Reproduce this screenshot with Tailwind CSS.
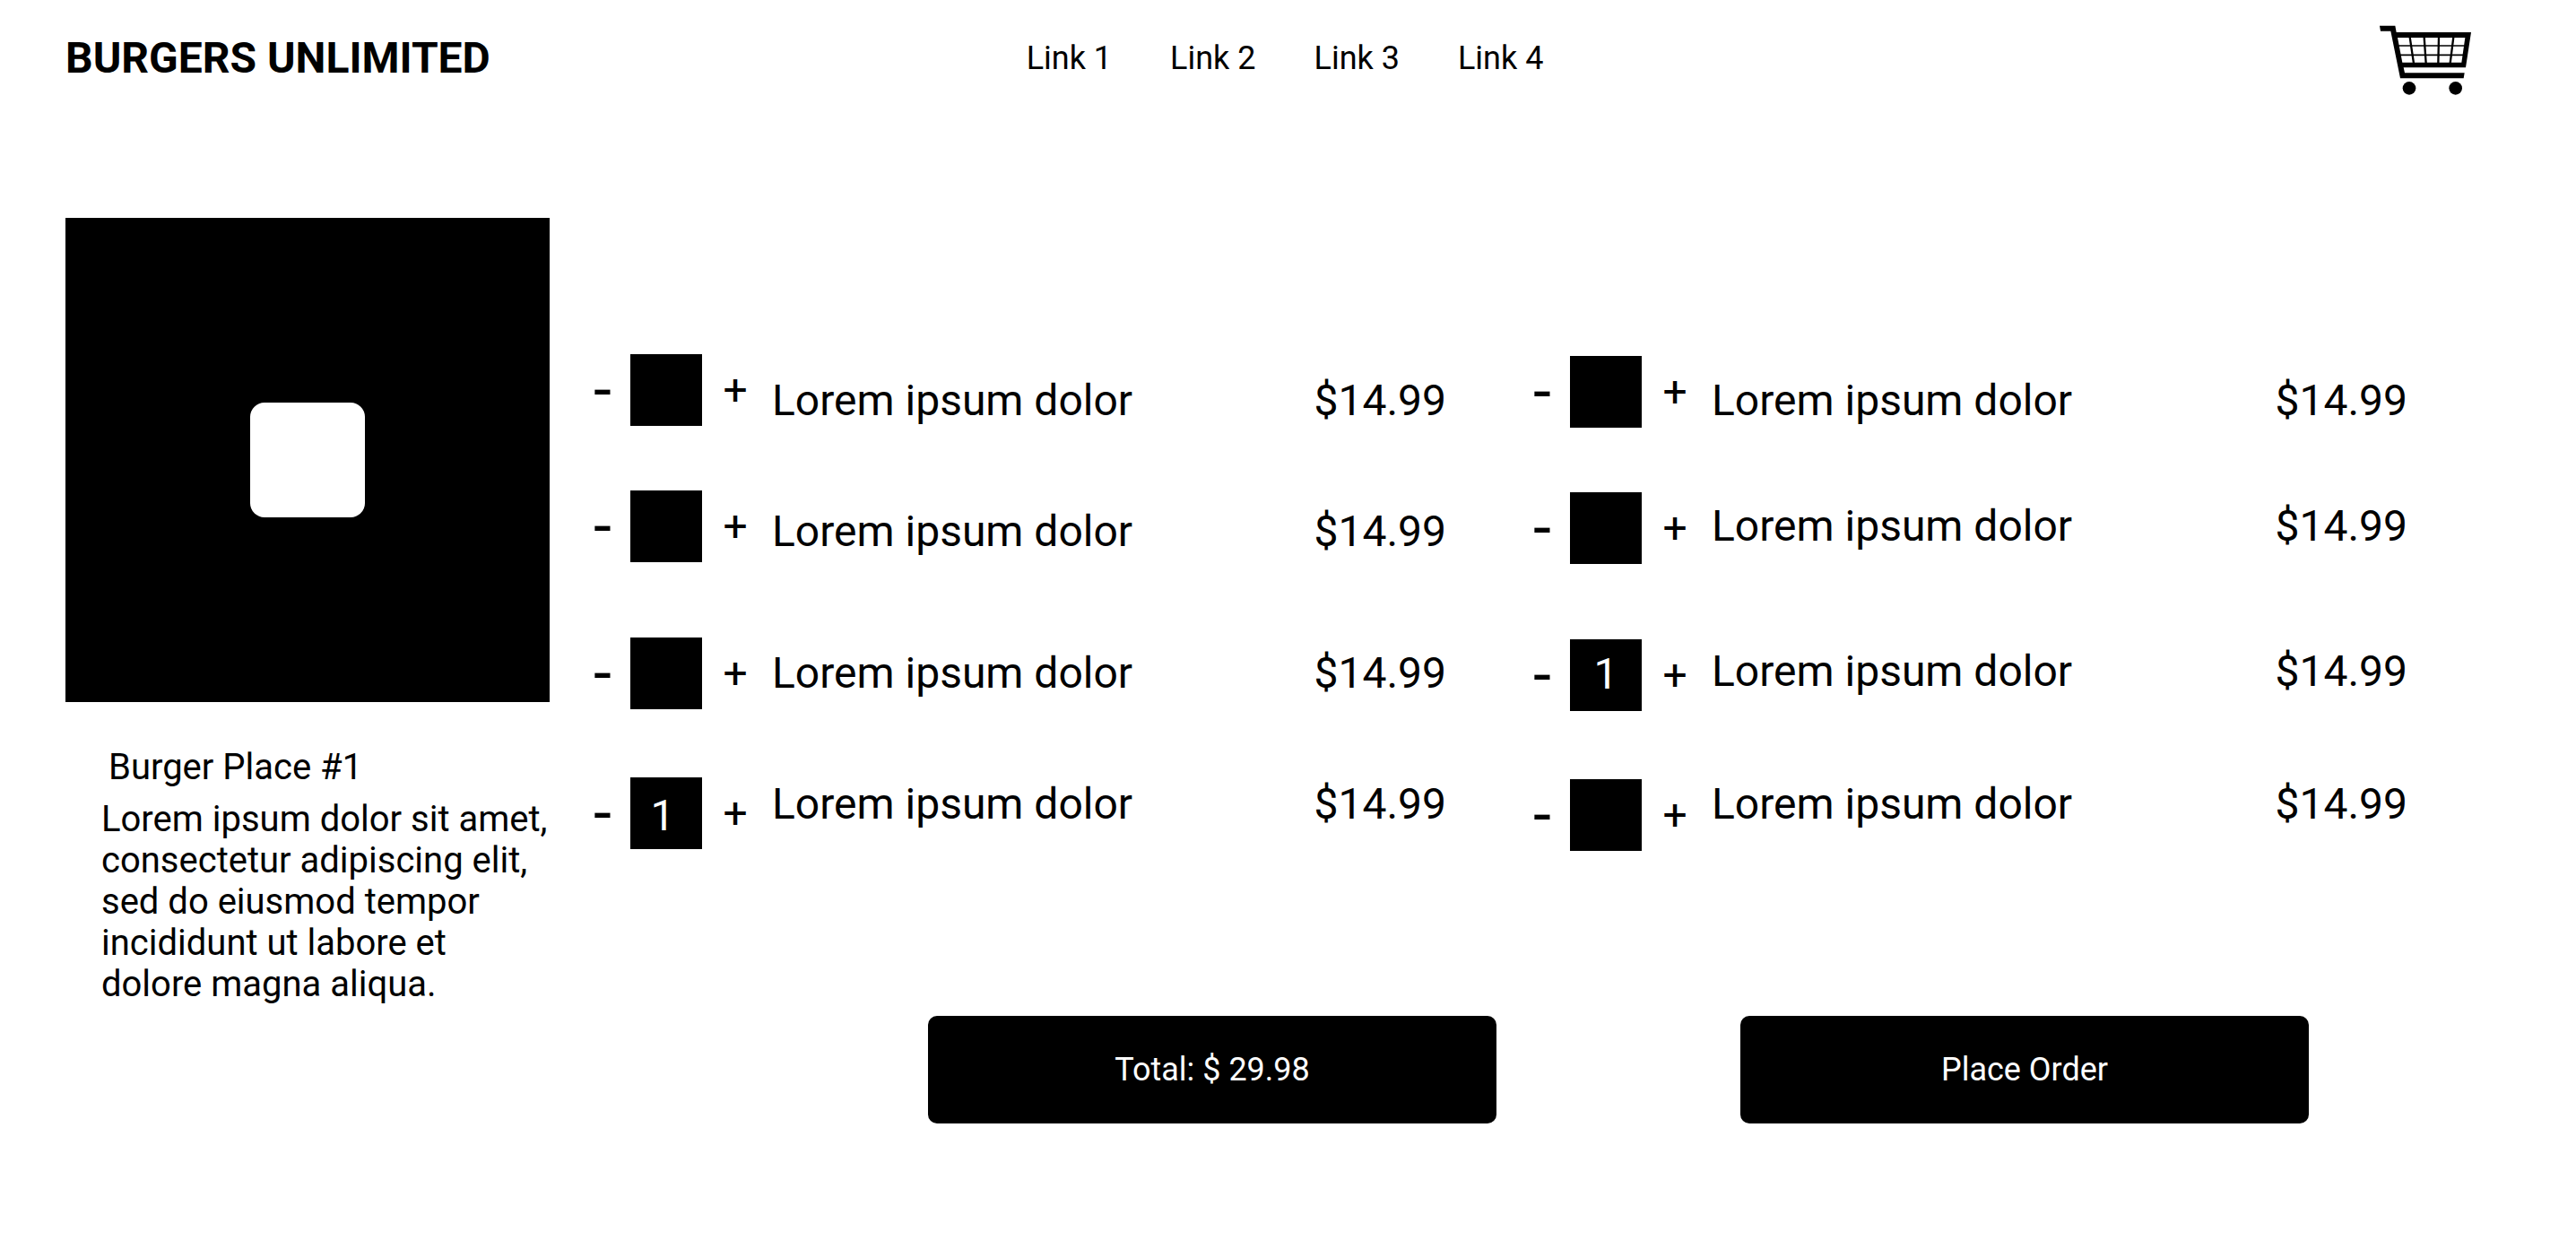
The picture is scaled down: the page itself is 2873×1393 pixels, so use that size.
<!DOCTYPE html>
<html lang="en">
<head>
<meta charset="utf-8">
<meta name="viewport" content="width=device-width, initial-scale=1">
<title>Burgers Unlimited</title>
<script src="https://cdn.jsdelivr.net/npm/@tailwindcss/browser@4"></script>
</head>
<body class="bg-white font-[Roboto,sans-serif] text-black">
<header class="grid h-[130px] grid-cols-[1fr_auto_1fr] items-center pl-[73px] pr-20">
  <h1 class="text-5xl/[56px] font-bold">BURGERS UNLIMITED</h1>
  <nav class="flex gap-[65px] text-4xl">
    <a href="#">Link 1</a>
    <a href="#">Link 2</a>
    <a href="#">Link 3</a>
    <a href="#">Link 4</a>
  </nav>
  <a href="#" aria-label="Shopping cart" class="mr-[37px] justify-self-end">
    <svg class="block h-[82px] w-[102px]" viewBox="102 72 306 246" fill="#000">
      <path fill-rule="evenodd" d="M102 86H154L158 108H408L390 226H182L186 244H386L383 262H171L139 104H105ZM162 126L178 209H376L388 126Z"/>
      <path d="M203 124L216 212M251 124L257 212M300 124L298 212M349 124L338 212" stroke="#000" stroke-width="7"/>
      <path d="M164 153H386M170 184H382" stroke="#000" stroke-width="5"/>
      <circle cx="201" cy="295" r="22"/>
      <circle cx="356" cy="295" r="22"/>
    </svg>
  </a>
</header>

<main class="mt-[113px] flex pl-[73px]">
  <aside class="w-[540px] shrink-0 text-[40px]/[46px]">
    <div class="flex aspect-square items-center justify-center bg-black">
      <div class="size-32 rounded-2xl bg-white"></div>
    </div>
    <h2 class="mt-[50px] pl-12">Burger Place #1</h2>
    <p class="mt-3 pl-10">Lorem ipsum dolor sit amet, consectetur adipiscing elit, sed do eiusmod tempor incididunt ut labore et dolore magna aliqua.</p>
  </aside>

  <form class="min-w-0 flex-1 pt-[152px] pr-[188px] pl-[49px]">
    <div class="grid grid-cols-[951fr_975fr] gap-[97px] text-5xl/[56px]">
      <ul>
        <li class="flex">
          <div class="flex h-20 items-center">
            <button type="button" aria-label="Remove one" class="w-5 text-7xl/[80px]">-</button>
            <input type="text" aria-label="Quantity" value="" class="ml-[21px] size-20 bg-black text-center text-white">
            <button type="button" aria-label="Add one" class="ml-[23px] w-7 text-5xl/[80px]">+</button>
          </div>
          <div class="ml-[27px] flex flex-1 justify-between pt-6"><span>Lorem ipsum dolor</span><span>$14.99</span></div>
        </li>
        <li class="mt-18 flex">
          <div class="flex h-20 items-center">
            <button type="button" aria-label="Remove one" class="w-5 text-7xl/[80px]">-</button>
            <input type="text" aria-label="Quantity" value="" class="ml-[21px] size-20 bg-black text-center text-white">
            <button type="button" aria-label="Add one" class="ml-[23px] w-7 text-5xl/[80px]">+</button>
          </div>
          <div class="ml-[27px] flex flex-1 justify-between pt-4.5"><span>Lorem ipsum dolor</span><span>$14.99</span></div>
        </li>
        <li class="mt-21 flex">
          <div class="flex h-20 items-center">
            <button type="button" aria-label="Remove one" class="w-5 text-7xl/[80px]">-</button>
            <input type="text" aria-label="Quantity" value="" class="ml-[21px] size-20 bg-black text-center text-white">
            <button type="button" aria-label="Add one" class="ml-[23px] w-7 text-5xl/[80px]">+</button>
          </div>
          <div class="ml-[27px] flex flex-1 justify-between pt-3"><span>Lorem ipsum dolor</span><span>$14.99</span></div>
        </li>
        <li class="mt-19 flex">
          <div class="flex h-20 items-center">
            <button type="button" aria-label="Remove one" class="w-5 text-7xl/[80px]">-</button>
            <input type="text" aria-label="Quantity" value="1" class="ml-[21px] size-20 bg-black pt-1 pr-2 text-center text-white">
            <button type="button" aria-label="Add one" class="ml-[23px] w-7 text-5xl/[80px]">+</button>
          </div>
          <div class="ml-[27px] flex flex-1 justify-between pt-0.5"><span>Lorem ipsum dolor</span><span>$14.99</span></div>
        </li>
      </ul>
      <ul class="pt-0.5">
        <li class="flex">
          <div class="flex h-20 items-center">
            <button type="button" aria-label="Remove one" class="w-5 text-7xl/[80px]">-</button>
            <input type="text" aria-label="Quantity" value="" class="ml-[21px] size-20 bg-black text-center text-white">
            <button type="button" aria-label="Add one" class="ml-[23px] w-7 text-5xl/[80px]">+</button>
          </div>
          <div class="ml-[27px] flex flex-1 justify-between pt-5.5"><span>Lorem ipsum dolor</span><span>$14.99</span></div>
        </li>
        <li class="mt-18 flex">
          <div class="flex h-20 items-center">
            <button type="button" aria-label="Remove one" class="w-5 text-7xl/[80px]">-</button>
            <input type="text" aria-label="Quantity" value="" class="ml-[21px] size-20 bg-black text-center text-white">
            <button type="button" aria-label="Add one" class="ml-[23px] w-7 text-5xl/[80px]">+</button>
          </div>
          <div class="ml-[27px] flex flex-1 justify-between pt-2.5"><span>Lorem ipsum dolor</span><span>$14.99</span></div>
        </li>
        <li class="mt-21 flex">
          <div class="flex h-20 items-center">
            <button type="button" aria-label="Remove one" class="w-5 text-7xl/[80px]">-</button>
            <input type="text" aria-label="Quantity" value="1" class="ml-[21px] size-20 bg-black pb-1 text-center text-white">
            <button type="button" aria-label="Add one" class="ml-[23px] w-7 text-5xl/[80px]">+</button>
          </div>
          <div class="ml-[27px] flex flex-1 justify-between pt-2"><span>Lorem ipsum dolor</span><span>$14.99</span></div>
        </li>
        <li class="mt-19 flex">
          <div class="flex h-20 items-center">
            <button type="button" aria-label="Remove one" class="w-5 text-7xl/[80px]">-</button>
            <input type="text" aria-label="Quantity" value="" class="ml-[21px] size-20 bg-black text-center text-white">
            <button type="button" aria-label="Add one" class="ml-[23px] w-7 text-5xl/[80px]">+</button>
          </div>
          <div class="ml-[27px] flex flex-1 justify-between"><span>Lorem ipsum dolor</span><span>$14.99</span></div>
        </li>
      </ul>
    </div>

    <div class="mt-46 flex gap-[272px] pr-[110px] pl-[373px] text-4xl text-white">
      <button type="button" class="h-30 flex-1 rounded-[10px] bg-black">Total: $ 29.98</button>
      <button type="submit" class="h-30 flex-1 rounded-[10px] bg-black">Place Order</button>
    </div>
  </form>
</main>
</body>
</html>
